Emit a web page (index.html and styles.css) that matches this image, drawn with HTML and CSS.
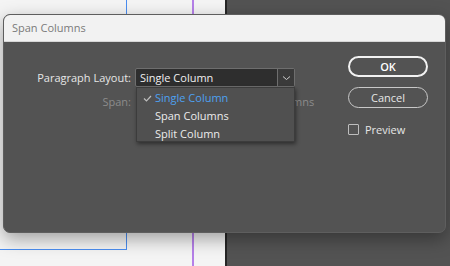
FILE: index.html
```html
<!DOCTYPE html>
<html lang="en">
<head>
    <meta charset="UTF-8">
    <meta name="viewport" content="width=device-width, initial-scale=1.0">
    <title>Span Columns</title>
    <link rel="stylesheet" href="styles.css">
</head>
<body>

<!-- Dokumen di belakang dialog -->
<div class="workspace">
    <div class="page">
        <div class="margin-box"></div>
        <div class="column-guide"></div>
    </div>
    <div class="pasteboard"></div>
</div>

<!-- Dialog Span Columns -->
<div class="dialog">
    <div class="dialog-title">Span Columns</div>
    <div class="dialog-body">
        <div class="form">
            <div class="form-row">
                <label class="form-label">Paragraph Layout:</label>
                <div class="select">
                    <span class="select-value">Single Column</span>
                    <span class="select-arrow">
                        <svg width="9" height="6" viewBox="0 0 9 6"><path d="M1 1.5 L4.5 4.5 L8 1.5" fill="none" stroke="#cfcfcf" stroke-width="1"/></svg>
                    </span>
                    <ul class="menu">
                        <li class="menu-item selected">
                            <svg class="check" width="9" height="7" viewBox="0 0 9 7"><path d="M1 3.5 L3.5 6 L8 1" fill="none" stroke="#bdbdbd" stroke-width="1.2"/></svg>
                            Single Column
                        </li>
                        <li class="menu-item">Span Columns</li>
                        <li class="menu-item">Split Column</li>
                    </ul>
                </div>
            </div>
            <div class="form-row disabled">
                <label class="form-label">Span:</label>
                <div class="spinner"></div>
                <span class="unit">Columns</span>
            </div>
        </div>
        <div class="actions">
            <button class="btn btn-primary">OK</button>
            <button class="btn">Cancel</button>
            <label class="checkbox"><span class="box"></span>Preview</label>
        </div>
    </div>
</div>

</body>
</html>
```

FILE: styles.css
```css
* {
    margin: 0;
    padding: 0;
    box-sizing: border-box;
}

body {
    font-family: 'Open Sans', 'Noto Sans', sans-serif;
    font-size: 11px;
    width: 450px;
    height: 266px;
    overflow: hidden;
    background: #535353;
}

.workspace {
    display: flex;
    height: 266px;
}

.page {
    display: flex;
    width: 227px;
    background: #f4f4f4;
    border-right: 2px solid #262626;
}

.margin-box {
    width: 127px;
    height: 250px;
    border-right: 1px solid #4a8df0;
    border-bottom: 1px solid #4a8df0;
}

.column-guide {
    width: 2px;
    margin-left: 65px;
    background: #b580e8;
}

.pasteboard {
    flex: 1;
    background: #535353;
}

.dialog {
    position: absolute;
    left: 3px;
    top: 14px;
    width: 443px;
    height: 219px;
    border-radius: 7px;
    overflow: hidden;
    background: #535353;
    border: 1px solid #5e5e5e;
    box-shadow: 0 6px 18px rgba(0, 0, 0, 0.35);
}

.dialog-title {
    height: 27px;
    line-height: 26px;
    padding-left: 8px;
    background: #f2f2f2;
    color: #7a7a7a;
    border-bottom: 1px solid #d6d6d6;
}

.dialog-body {
    display: flex;
    padding: 14px 17px 0 0;
}

.form {
    flex: 1;
    padding-top: 12px;
}

.form-row {
    display: flex;
    align-items: center;
    height: 19px;
    margin-bottom: 5px;
}

.form-label {
    width: 131px;
    padding-right: 4px;
    text-align: right;
    color: #e6e6e6;
}

.disabled .form-label,
.disabled .unit {
    color: #8c8c8c;
}

.select {
    position: relative;
    display: flex;
    width: 160px;
    height: 19px;
    background: #2e2e2e;
    border: 1px solid #6e6e6e;
    border-radius: 2px;
    color: #f0f0f0;
}

.select-value {
    flex: 1;
    line-height: 17px;
    padding-left: 4px;
}

.select-arrow {
    display: flex;
    align-items: center;
    justify-content: center;
    width: 17px;
    border-left: 1px solid #6e6e6e;
    background: #3a3a3a;
}

.menu {
    position: absolute;
    top: 18px;
    left: 0;
    width: 159px;
    height: 55px;
    list-style: none;
    background: #505050;
    border: 1px solid #3c3c3c;
    box-shadow: 1px 2px 4px rgba(0, 0, 0, 0.45);
    padding-top: 1px;
    z-index: 2;
}

.menu-item {
    position: relative;
    height: 18px;
    line-height: 18px;
    padding-left: 18px;
    color: #ececec;
}

.menu-item.selected {
    color: #4ea1f0;
}

.check {
    position: absolute;
    left: 6px;
    top: 6px;
}

.spinner {
    width: 134px;
}

.actions {
    display: flex;
    flex-direction: column;
    width: 80px;
}

.btn {
    height: 21px;
    margin-bottom: 10px;
    border: 1px solid #c8c8c8;
    border-radius: 11px;
    background: transparent;
    color: #e6e6e6;
    font-family: inherit;
    font-size: 11px;
}

.btn-primary {
    border: 2px solid #f2f2f2;
    color: #ffffff;
    font-weight: 600;
}

.checkbox {
    display: flex;
    align-items: center;
    margin-top: 4px;
    color: #e6e6e6;
}

.box {
    width: 11px;
    height: 11px;
    margin-right: 6px;
    border: 1px solid #bdbdbd;
    border-radius: 1px;
}
```
